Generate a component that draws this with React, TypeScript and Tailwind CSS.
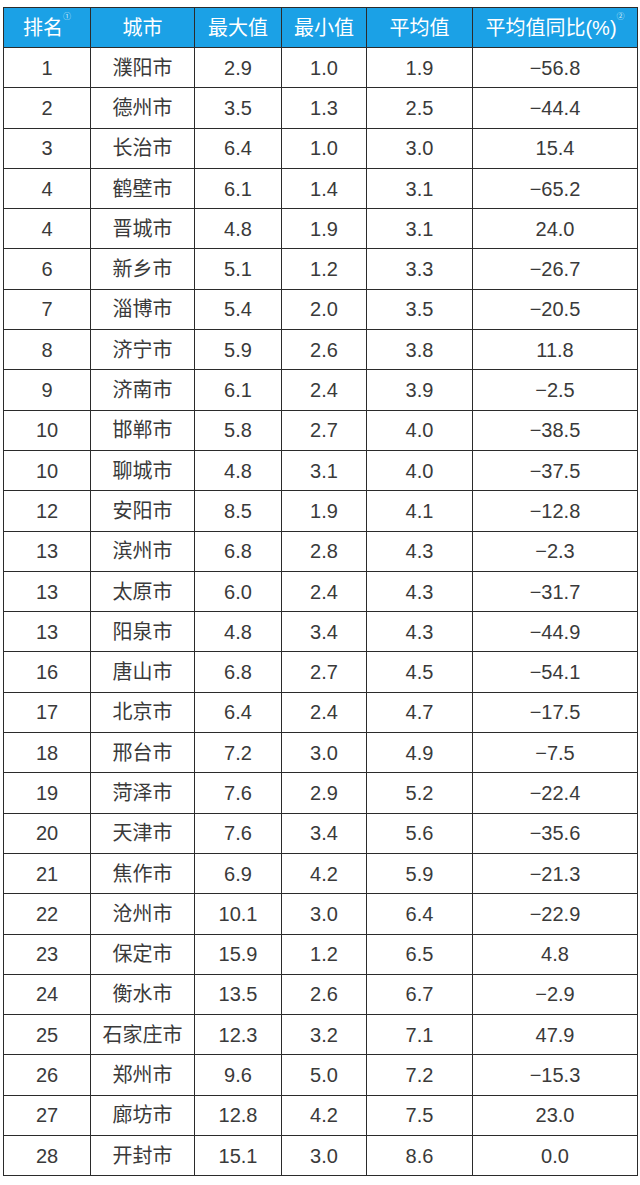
import React from "react";

const rows: [string, string, string, string, string, string][] = [
  ["1", "濮阳市", "2.9", "1.0", "1.9", "−56.8"],
  ["2", "德州市", "3.5", "1.3", "2.5", "−44.4"],
  ["3", "长治市", "6.4", "1.0", "3.0", "15.4"],
  ["4", "鹤壁市", "6.1", "1.4", "3.1", "−65.2"],
  ["4", "晋城市", "4.8", "1.9", "3.1", "24.0"],
  ["6", "新乡市", "5.1", "1.2", "3.3", "−26.7"],
  ["7", "淄博市", "5.4", "2.0", "3.5", "−20.5"],
  ["8", "济宁市", "5.9", "2.6", "3.8", "11.8"],
  ["9", "济南市", "6.1", "2.4", "3.9", "−2.5"],
  ["10", "邯郸市", "5.8", "2.7", "4.0", "−38.5"],
  ["10", "聊城市", "4.8", "3.1", "4.0", "−37.5"],
  ["12", "安阳市", "8.5", "1.9", "4.1", "−12.8"],
  ["13", "滨州市", "6.8", "2.8", "4.3", "−2.3"],
  ["13", "太原市", "6.0", "2.4", "4.3", "−31.7"],
  ["13", "阳泉市", "4.8", "3.4", "4.3", "−44.9"],
  ["16", "唐山市", "6.8", "2.7", "4.5", "−54.1"],
  ["17", "北京市", "6.4", "2.4", "4.7", "−17.5"],
  ["18", "邢台市", "7.2", "3.0", "4.9", "−7.5"],
  ["19", "菏泽市", "7.6", "2.9", "5.2", "−22.4"],
  ["20", "天津市", "7.6", "3.4", "5.6", "−35.6"],
  ["21", "焦作市", "6.9", "4.2", "5.9", "−21.3"],
  ["22", "沧州市", "10.1", "3.0", "6.4", "−22.9"],
  ["23", "保定市", "15.9", "1.2", "6.5", "4.8"],
  ["24", "衡水市", "13.5", "2.6", "6.7", "−2.9"],
  ["25", "石家庄市", "12.3", "3.2", "7.1", "47.9"],
  ["26", "郑州市", "9.6", "5.0", "7.2", "−15.3"],
  ["27", "廊坊市", "12.8", "4.2", "7.5", "23.0"],
  ["28", "开封市", "15.1", "3.0", "8.6", "0.0"],
];

const widths = ["w-[87px]", "w-[104px]", "w-[87px]", "w-[85px]", "w-[106px]", "w-[165px]"];

export default function App() {
  return (
    <div
      className="w-[640px] h-[1185px] bg-white pt-[7px] pl-[3px]"
      style={{ fontFamily: '"Liberation Sans", "Noto Sans CJK SC", sans-serif' }}
    >
      <table className="table-fixed border-collapse w-[634px] text-[20px] text-[#3a3a3a]">
        <colgroup>
          {widths.map((w, i) => (
            <col key={i} className={w} />
          ))}
        </colgroup>
        <thead>
          <tr className="h-[40px] bg-[#1ba1e6] text-white">
            <th className="border-[1.5px] border-[#2b2b2b] font-normal p-0 text-center">
              排名<sup className="text-[8px] text-[#cfe9f7] align-top relative top-[4px]">①</sup>
            </th>
            <th className="border-[1.5px] border-[#2b2b2b] font-normal p-0 text-center">城市</th>
            <th className="border-[1.5px] border-[#2b2b2b] font-normal p-0 text-center">最大值</th>
            <th className="border-[1.5px] border-[#2b2b2b] font-normal p-0 text-center">最小值</th>
            <th className="border-[1.5px] border-[#2b2b2b] font-normal p-0 text-center">平均值</th>
            <th className="border-[1.5px] border-[#2b2b2b] font-normal p-0 text-center whitespace-nowrap">
              平均值同比(%)<sup className="text-[8px] text-[#cfe9f7] align-top relative top-[4px]">②</sup>
            </th>
          </tr>
        </thead>
        <tbody>
          {rows.map((r, i) => (
            <tr key={i} className="h-[40.3px]">
              {r.map((c, j) => (
                <td key={j} className="border-[1.5px] border-[#2b2b2b] p-0 text-center whitespace-nowrap">
                  {c}
                </td>
              ))}
            </tr>
          ))}
        </tbody>
      </table>
    </div>
  );
}
